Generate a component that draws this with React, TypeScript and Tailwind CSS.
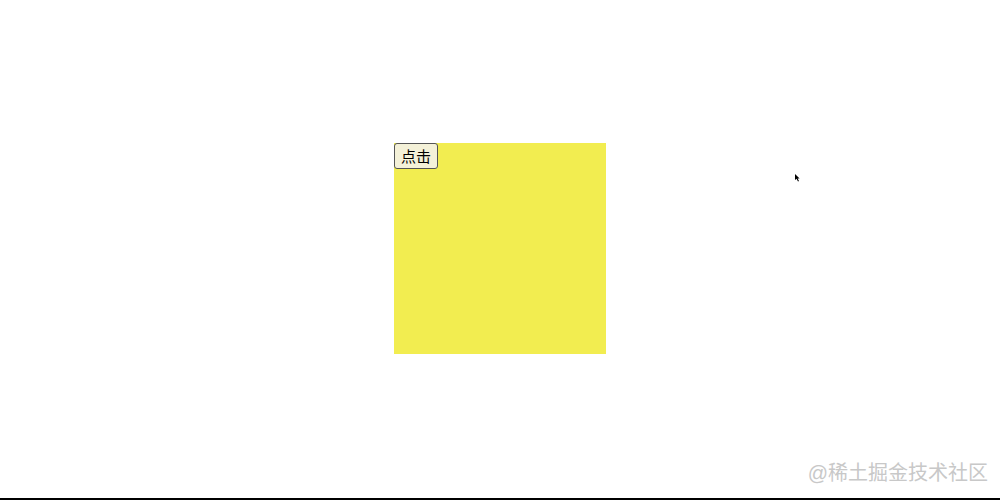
export default function App() {
  return (
    <div
      className="relative w-[1000px] h-[500px] bg-white overflow-hidden border-b-2 border-black"
      style={{ fontFamily: '"Liberation Sans", "Noto Sans CJK SC", sans-serif' }}
    >
      <div className="flex justify-center pt-[143px]">
        <div className="w-[212px] h-[211px] bg-[#f2ed50] flex items-start">
          <button className="h-[26px] w-[44px] text-[15px] leading-none text-black bg-[#f4f1d8] border border-[#555] rounded-[3px]">
            点击
          </button>
        </div>
      </div>

      {/* watermark */}
      <div className="absolute right-[12px] bottom-[15px] text-[20px] leading-none text-[#c8c8c8]">
        @稀土掘金技术社区
      </div>
      {/* cursor */}
      <svg className="absolute left-[795px] top-[174px]" width="6" height="8" viewBox="0 0 6 8">
        <path d="M0 0 L0 6 L1.5 4.8 L3 7.5 L4 7 L2.6 4.4 L4.6 4.4 Z" fill="#000" />
      </svg>
    </div>
  )
}
